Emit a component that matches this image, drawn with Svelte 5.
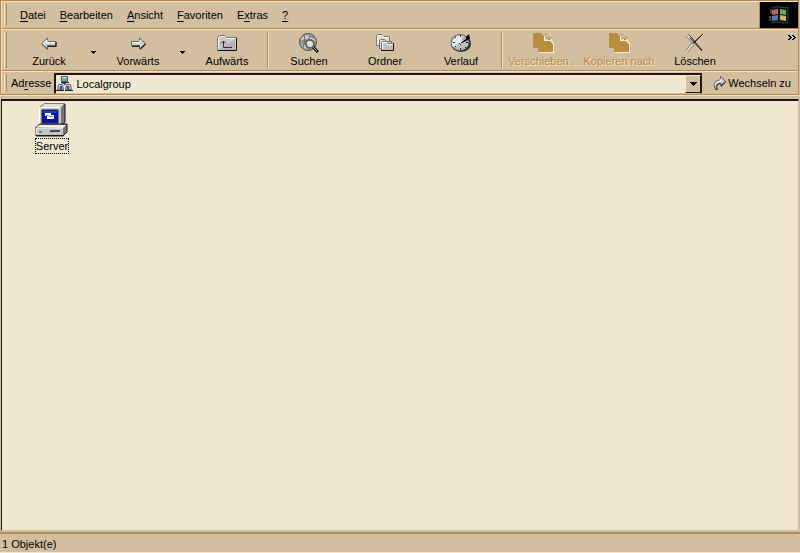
<script>
	let address = $state('Localgroup');
	let selected = $state(true);

	const menus = [
		{ before: '', key: 'D', after: 'atei' },
		{ before: '', key: 'B', after: 'earbeiten' },
		{ before: '', key: 'A', after: 'nsicht' },
		{ before: '', key: 'F', after: 'avoriten' },
		{ before: 'E', key: 'x', after: 'tras' },
		{ before: '', key: '?', after: '' }
	];

	const tools = [
		{ label: 'Zurück', icon: 'back', arrow: true },
		{ label: 'Vorwärts', icon: 'forward', arrow: true },
		{ label: 'Aufwärts', icon: 'up' },
		{ label: 'Suchen', icon: 'search', divider: true },
		{ label: 'Ordner', icon: 'folders' },
		{ label: 'Verlauf', icon: 'history' },
		{ label: 'Verschieben...', icon: 'move', divider: true, disabled: true },
		{ label: 'Kopieren nach', icon: 'copy', disabled: true },
		{ label: 'Löschen', icon: 'delete' }
	];
</script>

{#snippet toolIcon(name)}
	<svg class="tool-icon" viewBox="0 0 22 20" width="22" height="20" aria-hidden="true">
		{#if name === 'back'}
			<path d="M4 11.5 9.500 6v3h9v5h-9v3z" fill="#333" />
			<path d="M3.500 10.500 9.500 5v3.500h8v4h-8V16z" fill="#d0d0d0" stroke="#666" />
			<path d="M5 10.500 9 7v2.500h8" fill="none" stroke="#fff" />
			<path d="M10 13.500h8V9" fill="none" stroke="#222" />
		{:else if name === 'forward'}
			<path d="M19 11.500 13.500 6v3H5v5h8.500v3z" fill="#333" />
			<path d="M18.500 10.500 12.500 5v3.500h-8v4h8V16z" fill="#ccd4ce" stroke="#666" />
			<path d="M5 9.500h8V7" fill="none" stroke="#fff" />
			<path d="M5 13.500h8M13.500 15.500l5-5" fill="none" stroke="#222" />
		{:else if name === 'up'}
			<path d="M1.500 17.500v-13l2-2h5l2 2h10v13z" fill="#c9c8c7" stroke="#777" />
			<path d="m3 16 16-9v10H3z" fill="#b4b3b3" />
			<path d="M2.500 16V5l2-1.500h4l2 2h9" fill="none" stroke="#fff" />
			<path d="M2 17.500h18.500V5" fill="none" stroke="#111" />
			<path d="M7.500 8v6.500H16M5 10.500 7.500 8l2.500 2.500" fill="none" stroke="#303030" />
		{:else if name === 'search'}
			<circle cx="10" cy="9" r="8.500" fill="#969b99" stroke="#555" />
			<path d="m3 5 4-3 5 1-2 3-4 1-3 3zm10-3 3 3 2 4-3-2-3 1-1-3zM3 11l4 1 2 4-3-1z" fill="#c5cbc8" />
			<path d="m2 9 4-2 4 1 2-5 4 2M6 2l1 5-2 7" fill="none" stroke="#646866" />
			<circle cx="12" cy="11" r="4" fill="#dce1df" stroke="#666" stroke-width="2" />
			<path d="M9.500 11c0-2 1-2.500 2.500-2.500" fill="none" stroke="#fff" />
			<path d="m15 14 5 5" stroke="#111" stroke-width="3" />
			<path d="m15 14 4 4" stroke="#bbb" />
		{:else if name === 'folders'}
			<path d="M2.500 12.500v-10l1-1h4l2 2h6v9z" fill="#ddd" stroke="#777" />
			<path d="M3.500 11V3L8 2.500 10 4.500h5" fill="none" stroke="#fff" />
			<path d="M5.500 15.500v-8l1-1h4l2 2h5v7z" fill="#d4d4d2" stroke="#777" />
			<path d="M7.500 17.500v-8l1-1h4l1 2h6v7z" fill="#bfc0bf" stroke="#777" />
			<path d="M8.500 16V9.500h4l1 2H19" fill="none" stroke="#fff" />
			<path d="M7 17.500h12.500V10" fill="none" stroke="#111" />
		{:else if name === 'history'}
			<ellipse cx="11" cy="10.500" rx="10" ry="8.500" fill="#222" />
			<ellipse cx="10" cy="9.500" rx="9" ry="8" fill="#b6bfbc" stroke="#666" />
			<path d="M4 6c2-3 5-4 8-3l-1 6-8 5c-2-2-1-5 1-8" fill="#e8eceb" />
			<path d="M10.500 2v2M10.500 15v2M3 9.500h2M16 9.500h2M5 4l1 1M5 14l1-1M15 14l1 1" stroke="#222" />
			<path d="m10 10 9-9 1 5-8 4z" fill="#080808" />
			<path d="m10 10 6-5" stroke="#fff" />
			<path d="m9 10 2 2" stroke="#333" />
		{:else if name === 'move' || name === 'copy'}
			<path d="M2 1h8l3 3v3h6l3 3v10H7v-5H2z" fill="#fff0d1" />
			<path d="M1 0h8l3 3v5h6l3 3v8H6v-4H1z" fill="#b98c3f" />
			<path d="M14 2h3v4M15 6l2 2 3-3" fill="none" stroke="#fff0d1" />
			<path d="M13 1.500h2l2 2v3M14 4l3 3 3-3" fill="none" stroke="#a97c32" />
		{:else}
			<path d="m3 2 3 1 12 14M19 1l-9 8-7 9" fill="none" stroke="#333" />
			<path d="m3 2 6 7M9 11l-6 7" stroke="#444" stroke-width="3" />
			<path d="m3 2 6 7M9 11l-6 7" stroke="#ddd" stroke-width="2" />
			<path d="m6 5 12 13M19 1l-9 9" fill="none" stroke="#222" />
		{/if}
	</svg>
{/snippet}

<div class="window">
	<header>
		<div class="menu-row">
			<span class="grip"></span>
			<nav aria-label="Menü">
				{#each menus as item}
					<button>{item.before}<u>{item.key}</u>{item.after}</button>
				{/each}
			</nav>
			<div class="brand">
				<svg viewBox="0 0 38 26" width="38" height="26" role="img" aria-label="Windows">
					<path d="M10 7h8v5h-8zM9 14h8v5H9z" fill="#272b48" />
					<path d="M11 8h1M10 10h2M12 12h1M9 15h2M12 17h1M10 18h1" stroke="#b45b61" />
					<path d="M12 6c5-3 11 1 16-1v15c-5 3-11-2-17 1" fill="#081418" stroke="#284b4b" />
					<path d="m12 8 6-1v5l-6 1z" fill="#bd6555" />
					<path d="m20 7 6 1v5l-6-1z" fill="#68a668" />
					<path d="m12 14 6-1v5l-6 1z" fill="#5279a8" />
					<path d="m20 13 6 1v5l-6-1z" fill="#d2b45b" />
				</svg>
			</div>
		</div>

		<div class="tool-row">
			<span class="grip"></span>
			<div class="tools">
				{#each tools as tool}
					{#if tool.divider}<span class="divider"></span>{/if}
					<button class="tool" disabled={tool.disabled}>
						{@render toolIcon(tool.icon)}
						<span>{tool.label}</span>
					</button>
					{#if tool.arrow}
						<button class="history" aria-label="{tool.label}: Verlauf">
							<svg viewBox="0 0 5 3" width="5" height="3"><path d="M0 0h5v1H4v1H3v1H2V2H1V1H0z" /></svg>
						</button>
					{/if}
				{/each}
			</div>
			<button class="more" aria-label="Weitere Schaltflächen">
				<svg viewBox="0 0 8 5" width="8" height="5" aria-hidden="true">
					<path d="M0 0h2v1h1v1h1v1H3v1H2v1H0V4h1V3h1V2H1V1H0zM4 0h2v1h1v1h1v1H7v1H6v1H4V4h1V3h1V2H5V1H4z" />
				</svg>
			</button>
		</div>

		<div class="address-row">
			<span class="grip"></span>
			<label for="address">Ad<u>r</u>esse</label>
			<div class="combo">
				<svg viewBox="0 0 17 17" width="17" height="17" aria-hidden="true">
					<path d="M8.500 7v3M4 11l4-3 5 3" fill="none" stroke="#444" />
					<path d="M5.500 1.500h6v5h-6z" fill="#78aaa0" stroke="#505d61" />
					<path d="M5 7.500h8M0 15.500h8M9 15.500h8" stroke="#222" />
					<path d="m2.500 9.500h4l1 5h-6zM10.500 9.500h4l1 5h-6z" fill="#adb2d0" stroke="#64687c" />
					<path d="M4 11h2v3H4zM11 11h2v3h-2z" fill="#344d92" />
					<path d="M6 2.500h5M3 10.500h3M11 10.500h3" stroke="#dde" />
				</svg>
				<input id="address" bind:value={address} />
				<button class="drop" aria-label="Adressliste öffnen">
					<svg viewBox="0 0 7 4" width="7" height="4"><path d="M0 0h7v1H6v1H5v1H4v1H3V3H2V2H1V1H0z" /></svg>
				</button>
			</div>
			<button class="go">
				<svg viewBox="0 0 14 16" width="14" height="16" aria-hidden="true">
					<path d="M3 15c-3-5 0-9 5-9V2l5 5-5 5V9c-3 0-5 2-3 6z" fill="#222" />
					<path d="M2.500 14c-3-5 0-9 5-9V1.500l5 5-5 4V8c-3 0-5 2-4 6z" fill="#d0d0cf" stroke="#555" />
					<path d="M2 10c1-3 3-4 6-4V3" fill="none" stroke="#fff" />
				</svg>
				<span>Wechseln zu</span>
			</button>
		</div>
	</header>

	<main>
		<button class="item" class:selected onclick={() => (selected = !selected)}>
			<svg viewBox="0 0 34 34" width="34" height="34" aria-hidden="true">
				<path d="m5 4 4-3h21v18l-4 4H5z" fill="#77757c" stroke="#17171a" />
				<path d="m5 4 4-3h20l-4 4z" fill="#e1dedf" />
				<path d="M4 4h22v19H4z" fill="#c7c5c9" />
				<path d="M4.500 22V4.500H25" fill="none" stroke="#fff" />
				<path d="M7 7h16v13H7z" fill="#0714a6" stroke="#242234" />
				<path d="M8 8h14v2H8z" fill="#173ce0" />
				<path d="M10 10h6v2h3v4h-7v-3h-2z" fill="#fff" />
				<path d="M11 12h3v1h-3zM14 13h4v1h-4z" fill="#7992bd" />
				<path d="m1 24 4-3h27v8l-4 4H1z" fill="#77757c" stroke="#19181c" />
				<path d="m1 24 3-2h27l-3 3z" fill="#eeeced" />
				<path d="M1 25h27v7H1z" fill="#c4c2c6" />
				<path d="M1.500 31v-6H28" fill="none" stroke="#f8f8f8" />
				<path d="M15 27h10v2H15z" fill="#4b4a52" />
				<path d="M4 28h3v2H4z" fill="#44a05d" />
				<path d="M1 32.500h27" stroke="#17171a" />
			</svg>
			<span>Server</span>
		</button>
	</main>

	<footer>1 Objekt(e)</footer>
</div>

<style>
	:global(body) {
		margin: 0;
		background: #d1bfa0;
	}

	.window {
		--light: #ffdfb5;
		--dark: #b18a59;
		box-sizing: border-box;
		min-height: 100vh;
		display: flex;
		flex-direction: column;
		background: #d1bfa0;
		color: #000;
		font-family: 'Liberation Sans', Arial, sans-serif;
		font-size: 11px;
		line-height: 14px;
		border-bottom: 1px solid #f5e3c8;
	}

	button {
		margin: 0;
		padding: 0;
		border: 0;
		background: none;
		color: inherit;
		font: inherit;
		white-space: nowrap;
	}

	u {
		text-underline-offset: 2px;
	}

	header {
		margin: 0 1px 0 0;
		border: 1px solid var(--dark);
		box-shadow: 0 1px var(--light);
	}

	.menu-row,
	.tool-row,
	.address-row {
		display: flex;
		align-items: center;
		border-top: 1px solid var(--light);
		border-left: 1px solid var(--light);
	}

	.menu-row,
	.tool-row {
		border-bottom: 1px solid var(--dark);
	}

	.menu-row {
		height: 26px;
	}

	.grip {
		align-self: stretch;
		width: 1px;
		margin: 2px 4px 2px 2px;
		border-left: 1px solid var(--light);
		border-right: 1px solid var(--dark);
	}

	nav {
		flex: 1;
		display: flex;
		padding-left: 2px;
	}

	nav button {
		padding: 4px 7px;
	}

	.brand {
		display: flex;
		align-self: stretch;
		border-left: 1px solid var(--dark);
		background: #000;
	}

	.tool-row {
		height: 40px;
	}

	.tools {
		flex: 1;
		display: flex;
		align-items: center;
	}

	.tool {
		width: 76px;
		height: 38px;
		padding-top: 2px;
		display: flex;
		flex-direction: column;
		align-items: center;
		gap: 1px;
	}

	.tool-icon {
		flex: none;
	}

	.tool:disabled {
		color: #b58c49;
		text-shadow: 1px 1px #f6dfba;
	}

	.history {
		width: 13px;
		height: 30px;
	}

	.divider {
		height: 36px;
		margin: 0 2px;
		border-left: 1px solid var(--dark);
		border-right: 1px solid var(--light);
	}

	.more {
		display: flex;
		align-self: flex-start;
		padding: 5px 2px;
	}

	.address-row {
		height: 22px;
	}

	.combo {
		flex: 1;
		display: flex;
		align-items: center;
		box-sizing: border-box;
		height: 21px;
		margin-left: 3px;
		border-top: 2px solid #211610;
		border-left: 2px solid #211610;
		border-right: 1px solid #211610;
		border-bottom: 1px solid #d1bfa0;
		background: #efe7d0;
	}

	.combo input {
		flex: 1;
		min-width: 0;
		padding: 0 3px;
		border: 0;
		outline: 0;
		background: none;
		color: inherit;
		font: inherit;
	}

	.drop {
		display: flex;
		align-items: center;
		justify-content: center;
		width: 16px;
		height: 18px;
		box-sizing: border-box;
		border: 1px solid;
		border-color: #ffe6c2 #201510 #201510 #ffe6c2;
		background: #d1bfa0;
	}

	.go {
		display: flex;
		align-items: center;
		gap: 1px;
		padding: 0 7px 0 11px;
	}

	main {
		flex: 1;
		margin: 4px 1px 0;
		padding: 2px 14px;
		border-top: 2px solid #211610;
		border-left: 1px solid #211610;
		border-right: 1px solid #d1bfa0;
		border-bottom: 1px solid #d1bfa0;
		background: #efe7d0;
	}

	.item {
		width: 72px;
		display: flex;
		flex-direction: column;
		align-items: center;
		gap: 1px;
	}

	.item span {
		border: 1px dotted transparent;
	}

	.item.selected span {
		border-color: #000;
	}

	footer {
		margin-top: 1px;
		padding: 3px 2px 1px;
		border-top: 2px solid #a98e60;
	}
</style>
